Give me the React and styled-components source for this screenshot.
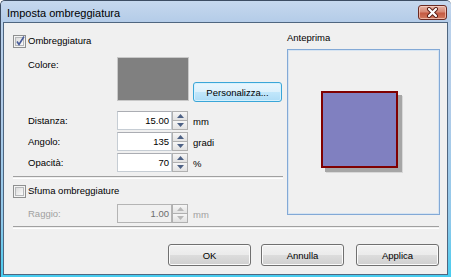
import React from "react";
import styled, { createGlobalStyle } from "styled-components";

const GlobalStyle = createGlobalStyle`
  body {
    margin: 0;
    background: #ffffff;
    font-family: "Liberation Sans", Arial, sans-serif;
  }
`;

const Window = styled.div`
  width: 451px;
  height: 277px;
  box-sizing: border-box;
  display: flex;
  flex-direction: column;
  border-top: 1px solid #3d4d63;
  border-left: 1px solid #3d4d63;
  border-radius: 5px 5px 0 0;
  overflow: hidden;
  background: linear-gradient(#bcd2eb 0%, #b0cbe8 40%, #8fc8ea 80%, #45cdf0 100%);
`;

const TitleBar = styled.div`
  height: 21px;
  flex: none;
  display: flex;
  align-items: center;
  padding: 0 4px 0 6px;
  background: linear-gradient(#c6d8ee, #b4cce8);
`;

const Title = styled.span`
  flex: 1;
  font-size: 11px;
  color: #000000;
  margin-top: 2px;
`;

const CloseButton = styled.div`
  width: 29px;
  height: 15px;
  box-sizing: border-box;
  margin-top: 2px;
  border: 1px solid #6b2a22;
  border-radius: 3px;
  display: flex;
  align-items: center;
  justify-content: center;
  background: linear-gradient(#e4b2a4 0%, #d88a76 45%, #c45a43 55%, #d27a5f 100%);
  box-shadow: inset 0 0 0 1px rgba(255, 220, 210, 0.6);
`;

const Frame = styled.div`
  flex: 1;
  display: flex;
  padding: 0 3px 2px 2px;
  min-height: 0;
`;

const Client = styled.div`
  flex: 1;
  display: flex;
  flex-direction: column;
  border: 1px solid #4f6680;
  background: #f0f0f0;
  font-size: 9.5px;
  color: #000000;
`;

const Main = styled.div`
  display: flex;
  gap: 4px;
  padding: 9px 6px 0 9px;
`;

const LeftCol = styled.div`
  width: 270px;
  display: flex;
  flex-direction: column;
  padding-top: 2px;
`;

const RightCol = styled.div`
  width: 153px;
  display: flex;
  flex-direction: column;
`;

const CheckRow = styled.label`
  display: flex;
  align-items: center;
  height: 14px;
  gap: 2px;
  margin-top: ${(p) => p.$top || 0}px;
`;

const Box = styled.span`
  width: 13px;
  height: 13px;
  box-sizing: border-box;
  border: 1px solid #8e8f8f;
  display: flex;
  align-items: center;
  justify-content: center;
  background: #f4f4f4;
  flex: none;
  & > span {
    width: 9px;
    height: 9px;
    box-sizing: border-box;
    border: 1px solid #b6b8ba;
    background: linear-gradient(135deg, #dcdcdc, #fbfbfb);
    position: relative;
  }
  svg {
    position: absolute;
    left: -2px;
    top: -3px;
  }
`;

const Text = styled.span`
  line-height: 12px;
  white-space: nowrap;
  color: ${(p) => (p.$disabled ? "#a0a0a0" : "#000000")};
`;

const ColorRow = styled.div`
  display: flex;
  align-items: flex-start;
  margin-top: 9px;
`;

const Label = styled.span`
  width: 104px;
  padding-left: 15px;
  box-sizing: border-box;
  flex: none;
  line-height: 12px;
  color: ${(p) => (p.$disabled ? "#a0a0a0" : "#000000")};
  margin-top: ${(p) => p.$top || 0}px;
`;

const Swatch = styled.div`
  width: 72px;
  height: 44px;
  box-sizing: border-box;
  border: 1px solid #c8c8c8;
  background: #808080;
`;

const HotButton = styled.div`
  width: 89px;
  height: 20px;
  box-sizing: border-box;
  margin-left: 4px;
  align-self: flex-end;
  margin-bottom: -1px;
  border: 1px solid #3aa6d8;
  border-radius: 3px;
  display: flex;
  align-items: center;
  justify-content: center;
  background: linear-gradient(#eaf6fd 0%, #dcf1fc 50%, #c2e7fb 50%, #aedcf6 100%);
  box-shadow: inset 0 0 0 1px #d6f1fd;
`;

const FieldRow = styled.div`
  display: flex;
  align-items: center;
  height: 19px;
  margin-top: ${(p) => p.$top || 0}px;
`;

const Input = styled.div`
  width: 55px;
  height: 19px;
  box-sizing: border-box;
  border: 1px solid ${(p) => (p.$disabled ? "#b4b4b4" : "#c6cdd4")};
  border-top-color: ${(p) => (p.$disabled ? "#b4b4b4" : "#abadb3")};
  background: ${(p) => (p.$disabled ? "#f0f0f0" : "#ffffff")};
  color: ${(p) => (p.$disabled ? "#6d6d6d" : "#000000")};
  display: flex;
  align-items: center;
  justify-content: flex-end;
  padding-right: 2px;
  flex: none;
`;

const Spin = styled.div`
  width: 16px;
  height: 19px;
  display: flex;
  flex-direction: column;
  flex: none;
`;

const SpinHalf = styled.div`
  flex: 1;
  box-sizing: border-box;
  border: 1px solid #b0b0b0;
  border-top-width: ${(p) => (p.$down ? 0 : 1)}px;
  background: linear-gradient(#f6f6f6, #e2e2e2);
  display: flex;
  align-items: center;
  justify-content: center;
`;

const Unit = styled.span`
  margin-left: 5px;
  margin-top: 3px;
  line-height: 12px;
  color: ${(p) => (p.$disabled ? "#a0a0a0" : "#000000")};
`;

const Separator = styled.div`
  height: 1px;
  border-top: 1px solid #a0a0a0;
  border-bottom: 1px solid #ffffff;
  margin: ${(p) => p.$margin};
`;

const PreviewTitle = styled.span`
  line-height: 12px;
  height: 12px;
`;

const PreviewBox = styled.div`
  height: 166px;
  margin-top: 5px;
  box-sizing: border-box;
  border: 1px solid #83a9d6;
  box-shadow: inset 0 0 0 1px #d6e4f2;
  display: flex;
  align-items: center;
  justify-content: center;
`;

const ShadowWrap = styled.div`
  width: 81px;
  height: 81px;
  margin-left: -4px;
  margin-top: -2px;
`;

const Square = styled.div`
  width: 77px;
  height: 77px;
  box-sizing: border-box;
  border: 2px solid #800000;
  background: #8080c0;
  box-shadow: 4px 4px 0 #a6a6a6, 5px 5px 0 #d8d8d8;
`;

const ButtonRow = styled.div`
  display: flex;
  justify-content: flex-end;
  gap: 10px;
  padding: 15px 8px 0 0;
`;

const PushButton = styled.div`
  width: 83px;
  height: 22px;
  box-sizing: border-box;
  border: 1px solid #707070;
  border-radius: 3px;
  display: flex;
  align-items: center;
  justify-content: center;
  background: linear-gradient(#f2f2f2 0%, #ebebeb 50%, #dddddd 50%, #cfcfcf 100%);
  box-shadow: inset 0 0 0 1px #fbfbfb;
  margin-left: ${(p) => p.$extra || 0}px;
`;

function CheckBox({ checked }) {
  return (
    <Box>
      <span>
        {checked ? (
          <svg width="12" height="12" viewBox="0 0 12 12">
            <path d="M3 6.5 L5 9.5 L10 1.5" fill="none" stroke="#4a5d9a" strokeWidth="1.6" />
          </svg>
        ) : null}
      </span>
    </Box>
  );
}

function Arrow({ down, disabled }) {
  return (
    <svg width="7" height="4" viewBox="0 0 7 4">
      <path
        d={down ? "M0 0 H7 L3.5 4 Z" : "M0 4 H7 L3.5 0 Z"}
        fill={disabled ? "#b8b8b8" : "#4d6185"}
      />
    </svg>
  );
}

function SpinField({ label, value, unit, top, disabled }) {
  return (
    <FieldRow $top={top}>
      <Label $disabled={disabled}>{label}</Label>
      <Input $disabled={disabled}>{value}</Input>
      <Spin>
        <SpinHalf>
          <Arrow disabled={disabled} />
        </SpinHalf>
        <SpinHalf $down>
          <Arrow down disabled={disabled} />
        </SpinHalf>
      </Spin>
      <Unit $disabled={disabled}>{unit}</Unit>
    </FieldRow>
  );
}

export default function App() {
  return (
    <>
      <GlobalStyle />
      <Window>
        <TitleBar>
          <Title>Imposta ombreggiatura</Title>
          <CloseButton>
            <svg width="13" height="11" viewBox="0 0 13 11">
              <path d="M3 2 L10 9 M10 2 L3 9" stroke="#5a1d15" strokeWidth="4" strokeLinecap="round" />
              <path d="M3 2 L10 9 M10 2 L3 9" stroke="#ffffff" strokeWidth="2.2" strokeLinecap="round" />
            </svg>
          </CloseButton>
        </TitleBar>
        <Frame>
          <Client>
            <Main>
              <LeftCol>
                <CheckRow>
                  <CheckBox checked />
                  <Text>Ombreggiatura</Text>
                </CheckRow>
                <ColorRow>
                  <Label $top={2}>Colore:</Label>
                  <Swatch />
                  <HotButton>Personalizza...</HotButton>
                </ColorRow>
                <SpinField label="Distanza:" value="15.00" unit="mm" top={10} />
                <SpinField label="Angolo:" value="135" unit="gradi" top={2} />
                <SpinField label="Opacità:" value="70" unit="%" top={2} />
                <Separator $margin="4px 0 0 0" />
                <CheckRow $top={5}>
                  <CheckBox />
                  <Text>Sfuma ombreggiature</Text>
                </CheckRow>
                <SpinField label="Raggio:" value="1.00" unit="mm" top={6} disabled />
              </LeftCol>
              <RightCol>
                <PreviewTitle>Anteprima</PreviewTitle>
                <PreviewBox>
                  <ShadowWrap>
                    <Square />
                  </ShadowWrap>
                </PreviewBox>
              </RightCol>
            </Main>
            <Separator $margin="3px 8px 0 9px" />
            <ButtonRow>
              <PushButton>OK</PushButton>
              <PushButton>Annulla</PushButton>
              <PushButton $extra={2}>Applica</PushButton>
            </ButtonRow>
          </Client>
        </Frame>
      </Window>
    </>
  );
}
